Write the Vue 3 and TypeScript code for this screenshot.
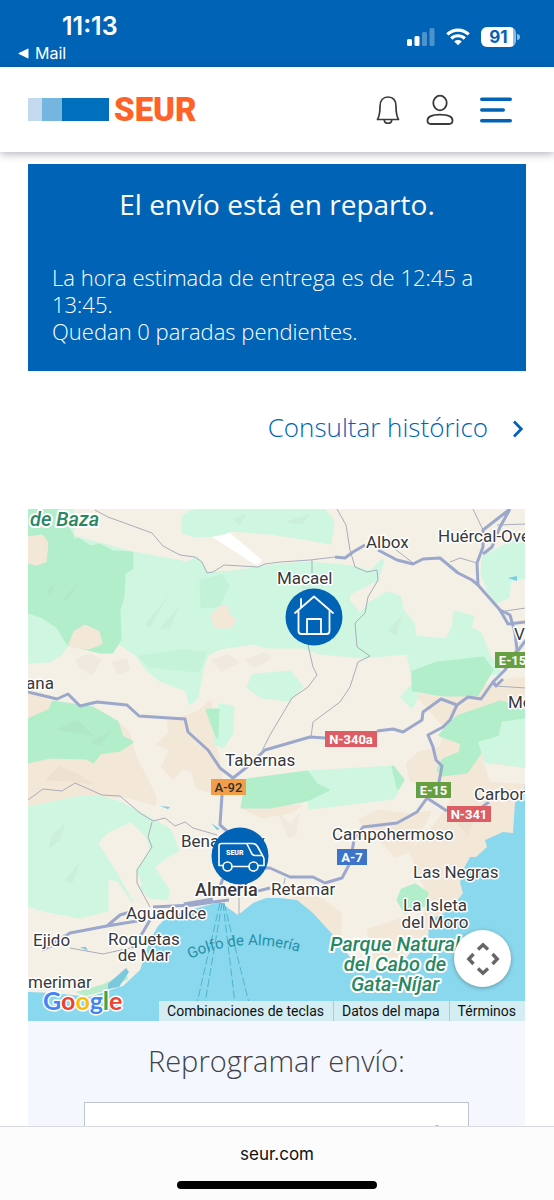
<script setup lang="ts">
import { ref } from 'vue'

interface Place { name: string; x: number; y: number; anchor?: string; bold?: boolean }
interface Shield { code: string; x: number; y: number; w: number; kind: string }

const places: Place[] = [
  { name: 'Albox', x: 366, y: 548 },
  { name: 'Huércal-Overa', x: 438, y: 542 },
  { name: 'Macael', x: 277, y: 584 },
  { name: 'Vera', x: 514, y: 640 },
  { name: 'ana', x: 26, y: 689 },
  { name: 'Mojácar', x: 508, y: 708 },
  { name: 'Tabernas', x: 225, y: 766 },
  { name: 'Carboneras', x: 474, y: 800 },
  { name: 'Campohermoso', x: 332, y: 840 },
  { name: 'Benahadux', x: 181, y: 847 },
  { name: 'Las Negras', x: 413, y: 878 },
  { name: 'Almería', x: 195, y: 896, bold: true },
  { name: 'Retamar', x: 271, y: 895 },
  { name: 'La Isleta', x: 435, y: 911, anchor: 'middle' },
  { name: 'del Moro', x: 435, y: 928, anchor: 'middle' },
  { name: 'Aguadulce', x: 126, y: 919 },
  { name: 'Ejido', x: 33, y: 946 },
  { name: 'Roquetas', x: 144, y: 945, anchor: 'middle' },
  { name: 'de Mar', x: 144, y: 961, anchor: 'middle' },
  { name: 'merimar', x: 28, y: 988 },
]

const shields: Shield[] = [
  { code: 'E-15', x: 495, y: 652, w: 35, kind: 'euro' },
  { code: 'N-340a', x: 325, y: 731, w: 52, kind: 'national' },
  { code: 'A-92', x: 211, y: 779, w: 35, kind: 'regional' },
  { code: 'E-15', x: 416, y: 782, w: 35, kind: 'euro' },
  { code: 'N-341', x: 447, y: 806, w: 44, kind: 'national' },
  { code: 'A-7', x: 337, y: 849, w: 30, kind: 'motorway' },
]

const parkLines = [
  { text: 'Parque Natural', x: 395, y: 951 },
  { text: 'del Cabo de', x: 395, y: 971 },
  { text: 'Gata-Níjar', x: 395, y: 991 },
]

const slot = ref('')
</script>

<template>
  <div class="screen">
    <div class="status">
      <div class="status-left">
        <span class="time">11:13</span>
        <a class="back" href="#">
          <svg width="11" height="11" viewBox="0 0 11 11" aria-hidden="true"><path d="M10.500 1.200v8.600q0 .8-.8.500L.8 6.100q-.8-.5 0-1L9.700.7q.8-.3.8.5z" fill="#fff" /></svg>
          <span>Mail</span>
        </a>
      </div>
      <div class="status-right">
        <svg width="28" height="18" viewBox="0 0 28 18" aria-label="Cobertura">
          <g fill="#fff">
            <rect x="0" y="11" width="5" height="7" rx="1.500" />
            <rect x="7.500" y="8" width="5" height="10" rx="1.500" />
            <rect x="15" y="4" width="5" height="14" rx="1.500" opacity=".3" />
            <rect x="22.500" y="0" width="5" height="18" rx="1.500" opacity=".3" />
          </g>
        </svg>
        <svg width="24" height="18" viewBox="0 0 24 18" aria-label="Wi-Fi">
          <g fill="none" stroke="#fff" stroke-width="3.200">
            <path d="M1.300 6.400a15.500 15.500 0 0 1 21.400 0" />
            <path d="M5.200 10.500a9.800 9.800 0 0 1 13.600 0" />
          </g>
          <path d="M8.200 13.400a5.600 5.600 0 0 1 7.600 0L12 17.300z" fill="#fff" />
        </svg>
        <span class="battery"><b>91</b></span>
      </div>
    </div>

    <header class="header">
      <a class="logo" href="#" aria-label="SEUR">
        <span class="bars"><i class="b1"></i><i class="b2"></i><i class="b3"></i></span>
        <span class="brand">SEUR</span>
      </a>
      <nav class="actions">
        <button type="button" aria-label="Notificaciones">
          <svg width="24" height="30" viewBox="0 0 24 30" fill="none" stroke="#3a3a3a" stroke-width="1.700" stroke-linejoin="round">
            <path d="M1.500 24.500c2-3.500 2.500-7 2.500-13C4 5.500 7 2 12 2s8 3.500 8 9.500c0 6 .5 9.500 2.500 13z" />
            <path d="M8.200 24.800c.5 4.600 7.100 4.600 7.600 0" />
          </svg>
        </button>
        <button type="button" aria-label="Mi cuenta">
          <svg width="28" height="32" viewBox="0 0 28 32" fill="none" stroke="#3a3a3a" stroke-width="1.800">
            <ellipse cx="14" cy="9" rx="6.700" ry="7.300" />
            <path d="M5 30h18c2 0 3.500-1 3.500-3.500 0-4-4.500-5.800-12.500-5.800S1.500 22.500 1.500 26.500C1.500 29 3 30 5 30z" />
          </svg>
        </button>
        <button type="button" aria-label="Menú">
          <svg width="32" height="26" viewBox="0 0 32 26" stroke="#0063b5" stroke-width="3.400" stroke-linecap="round">
            <path d="M1.700 2.200h28.600M1.700 13h21.600M1.700 23.800h28.600" />
          </svg>
        </button>
      </nav>
    </header>

    <main class="content">
      <section class="notice">
        <h1>El envío está en reparto.</h1>
        <p>La hora estimada de entrega es de 12:45 a 13:45.<br />Quedan 0 paradas pendientes.</p>
      </section>

      <a class="history" href="#">
        <span>Consultar histórico</span>
        <svg width="10" height="18" viewBox="0 0 10 18" fill="none" stroke="#0063b5" stroke-width="2.800"><path d="M1 1.500 8.300 9 1 16.500" /></svg>
      </a>

      <div class="map">
        <svg class="terrain" viewBox="28 509 497 512" preserveAspectRatio="xMidYMid slice" role="img" aria-label="Mapa de la entrega">
          <rect x="28" y="509" width="497" height="512" fill="#f5f0e6" />

          <g class="tan">
            <path d="M28 692 52 703 50 712 28 720z" />
            <path d="M28 762 50 757 87 758 93 763 100 753 120 750 117 722 128 732 135 757 146 778 155 797 155 804 130 797 93 795 62 800 28 808z" />
            <path d="M197 713 210 702 217 753 221 775 220 790 212 792 197 787 192 770 182 768 173 778 163 767 170 750 158 744 170 733 168 722z" />
            <path d="M417 695h26l24-3 40-12 19-2v120l-12 5v30l-30 20-10 30-3 25-30 30-17-6 3-40-16-40 25-28 20-30-23-2-22-12-4-16 12-11 21-5 6-20z" />
            <path d="M360 820 378 811 412 815 430 812 410 850 396 856z" />
            <path d="M242 807 300 806 290 812 262 817z" />
            <path d="M288 901 310 893 322 900 340 913 340 950 325 930z" />
            <path d="M368 930 400 920 430 930 418 950 375 960z" />
          </g>

          <g class="green">
            <path d="M28 509h45v28l30 8 30 8 27 5 27 5 10-5 10 15 26-1 47-7 30-2 43 4 17 5 13-12-6 20-27 13-2 7 12 15 10-12 17-10 13 4 2 13 11 13 2 14 32 3 6-13 2-15 18 5-3 11 10 5 10 24 10 16-87 7-5-27-45 4-43-4-17-6-36 0-14-4-33 5-13 7-5 15-5 27-7 6-3-13-27-10-12-10-11-15-17-12z" />
            <path d="M28 612 43 617 58 627 68 644 60 655 50 661 28 662z" />
            <path d="M183 517 190 512 207 509H323L333 520 330 543 303 538 270 533 230 530 220 535 196 536 183 532z" />
            <path d="M483 557 510 543 526 540V577L510 580 508 597 497 602 488 590 482 573z" />
            <path d="M248 687 253 675 290 672 302 687 288 700 262 697z" />
            <path d="M402 697 413 685 417 697 412 707z" />
            <path d="M307 772 393 767 403 780 393 798 353 803 310 808z" />
            <path d="M220 705 233 707 232 733 223 747 215 743z" />
            <path d="M160 672 197 668 197 697 190 703 187 690z" />
            <path d="M28 808 80 797 100 797 120 803 147 817 170 830 178 850 166 857 153 867 168 890 167 899 150 897 137 883 132 900 118 880 107 878 107 910 80 917 43 910 28 905z" />
          </g>

          <g class="forest">
            <path d="M28 509h30l15 28v5l5-3 12 8 10-2 13 7 19 1v15l-8 5-1 24-4 13 1 30-8 12-12 0-32-8-10-17-15-10-15-5z" />
            <path d="M28 720 50 710 53 702 93 708 117 722 122 737 132 742 120 750 100 753 93 762 87 758 50 757 28 762z" />
            <path d="M413 672 437 663 483 658 492 670 477 695 443 695 413 690z" />
            <path d="M440 735 457 717 500 702 526 707V720L503 723 500 737 480 743 480 753 467 772 443 775 438 770 443 760 460 753 462 743z" />
            <path d="M247 780 307 772 317 785 328 790 307 800 270 807 242 807z" />
            <path d="M207 710h11l-1 27z" />
            <path d="M393 767 403 780 398 788z" />
            <path d="M201 581 222 576 228 586 218 606 202 607z" opacity=".45" />
            <path d="M398 900 402 890 415 885 427 893 426 904 405 912z" />
            <path d="M140 657 180 651 205 653 198 671 150 666z" opacity=".35" />
          </g>
          <path class="green" d="M480 743 500 737 503 723 526 720V768L500 762 487 765z" />
          <path d="M484 763 526 768V784L490 782z" fill="#f5f0e6" />
          <path d="M98 843 108 833 131 822 146 837 150 851 136 870 142 884 132 900 118 874z" fill="#f5f0e6" />

          <g class="clearing">
            <path d="M28 538 42 536 47 543 45 561 36 564 28 562z" />
            <path d="M70 644 75 632 85 626 98 632 101 643 88 648 72 646z" />
            <path d="M212 616 219 608 226 607 229 616 235 620 230 627 216 627z" />
          </g>
          <path d="M212 537 230 533 262 560 257 566z" fill="#fff" />

          <g class="relief">
            <path d="M145 625 165 600 172 590 157 615 150 628zM158 630 180 606 170 628zM46 592 56 582 50 596zM62 600 78 583 68 600zM55 730 78 720 94 736 70 732zM90 742 112 730 100 746z" />
            <path d="M75 660 90 653 102 660 92 675 80 668zM112 662 127 658 130 670 117 675zM210 660 228 654 240 662 222 672zM245 660 264 652 272 658 255 668z" />
            <path d="M52 835 66 822 60 840 48 850zM65 880 80 862 72 884zM300 588 313 580 308 594zM388 630 402 615 396 636zM285 522 310 514 302 525zM232 519 246 514 240 525z" />
            <path d="M45 780 60 766 80 775 95 785 76 782zM278 812 290 824 300 812 296 835 288 838zM450 815 474 820 468 836z" />
          </g>

          <path class="water" d="M28 992 53 993 90 997 110 990 123 986 140 970 150 940 158 926 167 917 197 908 220 902 238 915 253 903 266 898 280 898 297 900 313 913 333 935 350 957 370 970 397 970 410 953 428 937 430 920 450 910 463 893 460 883 463 870 470 857 476 857 487 847 485 840 503 832 513 833 515 803 524 793 526 773V1021H28z" />
          <path d="M76 992 104 984 126 972 128 979 108 990 85 996z" fill="#b8eccb" />
          <path d="M108 984 126 968 129 972 119 987 108 989z" fill="#7cc8df" />
          <path d="M508 578 517 576V581zM160 806 170 807 168 809zM211 823 220 829 217 830zM80 947 86 947 88 951z" fill="#79cde4" />

          <g class="ferry">
            <path d="M220 903 197 1003M222 903 205 1003M223 903 235 1003M224 903 249 1003" />
          </g>

          <g class="lane">
            <path d="M95 510 108 517 152 533 163 546 180 555 195 557 202 562 207 573 213 572 224 565 258 567 265 564 280 562 310 560 335 557" />
            <path d="M337 509 346 525 350 550 355 567 367 572 377 570 378 580 368 597 365 613 355 623 357 647 370 656 358 662 350 687 340 702 313 722 311 737" />
            <path d="M312 560V573M308 645 313 667 317 675 308 687 292 698 270 735 262 751" />
            <path d="M28 800 43 789 62 791 75 783 102 795 120 796 140 813 153 821 165 818 175 826 185 822 193 828 217 835" />
            <path d="M152 822 148 837 152 847 137 870 137 883 150 907" />
            <path d="M70 948 103 954 130 948M42 951 54 946" />
            <path d="M473 509 483 530M497 525 526 524M450 562 460 558 477 563M395 549 413 563M505 611 526 608M495 686 526 688M285 878 284 884M239 894V915" />
          </g>
          <g class="road">
            <path d="M28 692 57 699 68 694 80 706 97 702 127 705 139 716 185 719 188 732 208 750 220 768 233 778 247 767 265 750 310 737 325 738M377 731 393 729 403 732 422 720 423 712 441 699 457 705 468 697 481 699 493 682 505 670 517 650 515 633 510 615 500 610 478 585 472 580 458 573 440 558 423 559 413 564 397 560 378 550M365 545 353 552 345 558 335 557" />
            <path d="M478 585 477 563 483 547V530L510 509M483 554 492 547 500 527 510 509" />
            <path d="M500 610 508 624 526 622M526 640 517 652 505 670M493 682 496 686 503 679" />
            <path d="M457 705 450 720 443 727 428 735 433 747 436 760 442 766 439 782M427 798 417 812 397 823 363 827 354 840 350 863 342 878 325 883 313 877 290 877 270 868 255 868" />
            <path d="M427 798 447 811M482 807 489 802" />
            <path d="M222 795 220 825 235 838M223 878 218 893M250 893 270 888" />
            <path d="M43 950 70 933 107 926 143 920M107 926 120 915 130 912M153 907 193 905 213 902 229 900M150 920 143 932 132 948" />
            <path d="M184 905 213 900" stroke-width="5" />
          </g>

          <g class="park">
            <text x="30" y="526">de Baza</text>
            <text v-for="l in parkLines" :key="l.text" :x="l.x" :y="l.y" text-anchor="middle">{{ l.text }}</text>
          </g>
          <path id="gulf" d="M190 959Q242 934 306 954" fill="none" />
          <text class="gulf"><textPath href="#gulf">Golfo de Almería</textPath></text>

          <g class="places">
            <text v-for="p in places" :key="p.name" :x="p.x" :y="p.y" :text-anchor="p.anchor ?? 'start'" :class="{ city: p.bold }">{{ p.name }}</text>
          </g>

          <g v-for="(s, i) in shields" :key="i" :class="['shield', s.kind]">
            <rect :x="s.x" :y="s.y" :width="s.w" height="16" />
            <text :x="s.x + s.w / 2" :y="s.y + 13" text-anchor="middle">{{ s.code }}</text>
          </g>

          <g fill="none" stroke="#fff" stroke-width="1.800" stroke-linecap="round" stroke-linejoin="round">
            <circle cx="314" cy="617" r="28.500" fill="#0063b5" stroke="none" />
            <path d="M295 613 314 596.500 333 613M298.500 610.500V631q0 3 3 3h25q3 0 3-3V610.500M301 607.500V599.500M307 634V619h14v15M301 607V599" />
          </g>
          <g fill="none" stroke="#fff" stroke-width="1.600" stroke-linecap="round" stroke-linejoin="round">
            <circle cx="240" cy="856" r="28.500" fill="#0063b5" stroke="none" />
            <path d="M222.500 865.500H219V846q0-2.500 2.500-2.500h31q3 0 5 3l5 9q1.500 2 1.500 4v6h-5.500M232 866.500h17" />
            <path d="M247 844 251 852q1 3.500 4 3.500h6.500" />
            <circle cx="227.500" cy="866.500" r="4.500" />
            <circle cx="253.500" cy="866.500" r="4.500" />
          </g>
          <text class="van-brand" x="226" y="855">SEUR</text>

          <text class="google" x="43" y="1010"><tspan fill="#4285f4">G</tspan><tspan fill="#ea4335">o</tspan><tspan fill="#fbbc05">o</tspan><tspan fill="#4285f4">g</tspan><tspan fill="#34a853">l</tspan><tspan fill="#ea4335">e</tspan></text>
        </svg>

        <button class="camera" type="button" aria-label="Controles de la cámara del mapa">
          <svg width="34" height="34" viewBox="0 0 34 34" fill="none" stroke="#666" stroke-width="3.400">
            <path d="M12 7.500 17 2.800 22 7.500M12 26.500 17 31.200 22 26.500M7.500 12 2.800 17 7.500 22M26.500 12 31.200 17 26.500 22" />
          </svg>
        </button>

        <div class="credits">
          <button type="button">Combinaciones de teclas</button>
          <button type="button">Datos del mapa</button>
          <a href="#">Términos</a>
        </div>
      </div>

      <section class="reschedule">
        <label for="slot">Reprogramar envío:</label>
        <div class="picker">
          <select id="slot" v-model="slot"><option value=""></option></select>
          <svg width="12" height="16" viewBox="0 0 12 16" fill="none" stroke="#8a8f99" stroke-width="1.500" aria-hidden="true"><path d="M2 5q4-6 8 0M2 11q4 6 8 0" /></svg>
        </div>
      </section>
    </main>

    <footer class="browser">
      <span>seur.com</span>
      <i class="home"></i>
    </footer>
  </div>
</template>

<style>
body { margin: 0; background: #fff; }
</style>

<style scoped>
* { box-sizing: border-box; }
button { border: 0; padding: 0; background: none; font: inherit; color: inherit; cursor: pointer; }
a { color: inherit; text-decoration: none; }
svg { display: block; }

.screen { display: flex; flex-direction: column; height: 100vh; background: #fff; font-family: "Open Sans", "Noto Sans", sans-serif; }

.status { flex: none; display: flex; justify-content: space-between; height: 67px; padding: 11px 38px 0 18px; background: #0063b5; color: #fff; font-family: Inter, sans-serif; }
.status-left { display: flex; flex-direction: column; }
.time { padding-left: 44px; font-size: 25px; line-height: 30px; font-weight: 600; }
.back { display: flex; align-items: center; gap: 6px; font-size: 16px; line-height: 24px; font-weight: 400; }
.status-right { display: flex; align-items: center; gap: 11px; height: 52px; }
.battery { position: relative; display: flex; align-items: center; justify-content: center; width: 35px; height: 20px; border-radius: 6px; background: linear-gradient(90deg, #fff 91%, #8fbbe0 91%); color: #0063b5; font-size: 17px; line-height: 20px; }
.battery::after { content: ""; position: absolute; right: -4px; top: 7px; width: 3px; height: 6px; border-radius: 0 3px 3px 0; background: #8fbbe0; }

.header { flex: none; position: relative; z-index: 1; display: flex; align-items: center; justify-content: space-between; height: 85px; padding: 0 42px 0 28px; background: #fff; box-shadow: 0 2px 8px rgba(40, 40, 70, .35); }
.logo { display: flex; align-items: center; gap: 5px; }
.bars { display: flex; height: 23px; }
.b1 { width: 14px; background: #c3daee; }
.b2 { width: 20px; background: #74b6df; }
.b3 { width: 47px; background: #0070bd; }
.brand { color: #ff6228; font-family: Roboto, sans-serif; font-weight: 900; font-size: 33px; line-height: 32px; }
.actions { display: flex; align-items: center; gap: 26px; }

.content { flex: 1; min-height: 0; overflow: hidden auto; scrollbar-width: none; padding: 12px 28px 0; }
.notice { padding: 24px 24px 26px; background: #0063b5; color: #fff; }
.notice h1 { margin: 0 0 44px; text-align: center; font-size: 28px; line-height: 32px; font-weight: 500; }
.notice p { margin: 0; font-size: 22px; line-height: 27px; font-weight: 300; }

.history { display: flex; align-items: center; justify-content: flex-end; gap: 25px; margin: 40px 0 66px; padding-right: 3px; color: #0063b5; font-size: 26px; line-height: 32px; font-weight: 300; }
.history svg { margin-top: 4px; }

.map { position: relative; margin-right: 1px; aspect-ratio: 497 / 512; overflow: hidden; font-family: Roboto, sans-serif; }
.terrain { width: 100%; height: 100%; }
.tan, .green, .forest, .clearing { stroke-width: 3; stroke-linejoin: round; }
.tan, .clearing { fill: #f3e7d8; stroke: #f3e7d8; }
.green { fill: #cff6e1; stroke: #cff6e1; }
.forest { fill: #b3eecb; stroke: #b3eecb; }
.relief { fill: #8a8070; opacity: .05; }
.water { fill: #8ad8ed; }
.ferry { fill: none; stroke: #4cb4cf; stroke-width: 1; stroke-dasharray: 8 3; }
.lane { fill: none; stroke: #a9aebb; stroke-width: 1; stroke-linejoin: round; }
.road { fill: none; stroke: #9ba8cb; stroke-width: 3; stroke-linejoin: round; }
.places text { font-size: 17px; fill: #37383c; stroke: #fff; stroke-width: 3px; stroke-linejoin: round; paint-order: stroke; }
.places .city { font-weight: 500; font-size: 18px; }
.park text { font-size: 20px; font-style: italic; font-weight: 500; fill: #2a8763; stroke: #fff; stroke-width: 4px; stroke-linejoin: round; paint-order: stroke; }
.gulf { font-size: 15px; fill: #2590a8; }
.shield text { font-size: 13px; font-weight: 700; fill: #fff; }
.euro rect { fill: #659f40; }
.national rect { fill: #dc5d63; }
.motorway rect { fill: #3b74c9; }
.regional rect { fill: #f19d4a; }
.regional text { fill: #33302c; font-weight: 500; }
.van-brand { font-size: 7px; font-weight: 900; fill: #fff; }
.google { font-family: Lato, sans-serif; font-size: 25px; font-weight: 700; stroke: #fff; stroke-width: 3px; stroke-linejoin: round; paint-order: stroke; }

.camera { position: absolute; right: 14px; bottom: 34px; display: grid; place-items: center; width: 57px; height: 57px; border-radius: 50%; background: #fff; box-shadow: 0 1px 4px rgba(0, 0, 0, .3); }
.credits { position: absolute; right: 0; bottom: 0; display: flex; gap: 1px; font-size: 14px; line-height: 20px; color: #111; }
.credits > * { padding: 0 9px 0 8px; background: #d3edf3; white-space: nowrap; }

.reschedule { padding: 23px 56px 40px; margin-right: 1px; background: #f4f7fe; }
.reschedule label { display: block; text-align: center; font-size: 29px; line-height: 34px; font-weight: 300; color: #3f4248; }
.picker { position: relative; margin-top: 24px; }
.picker select { display: block; width: 100%; height: 60px; appearance: none; border: 1px solid #bfc3d2; border-radius: 0; background: #fff; font: inherit; }
.picker svg { position: absolute; right: 26px; top: 22px; }

.browser { flex: none; display: flex; flex-direction: column; align-items: center; justify-content: space-between; height: 74px; padding: 16px 0 11px; border-top: 1px solid #d9dade; background: #fcfcfd; color: #111; font-family: Inter, sans-serif; font-size: 17px; line-height: 22px; }
.home { width: 36%; height: 8px; border-radius: 4px; background: #000; }
</style>
